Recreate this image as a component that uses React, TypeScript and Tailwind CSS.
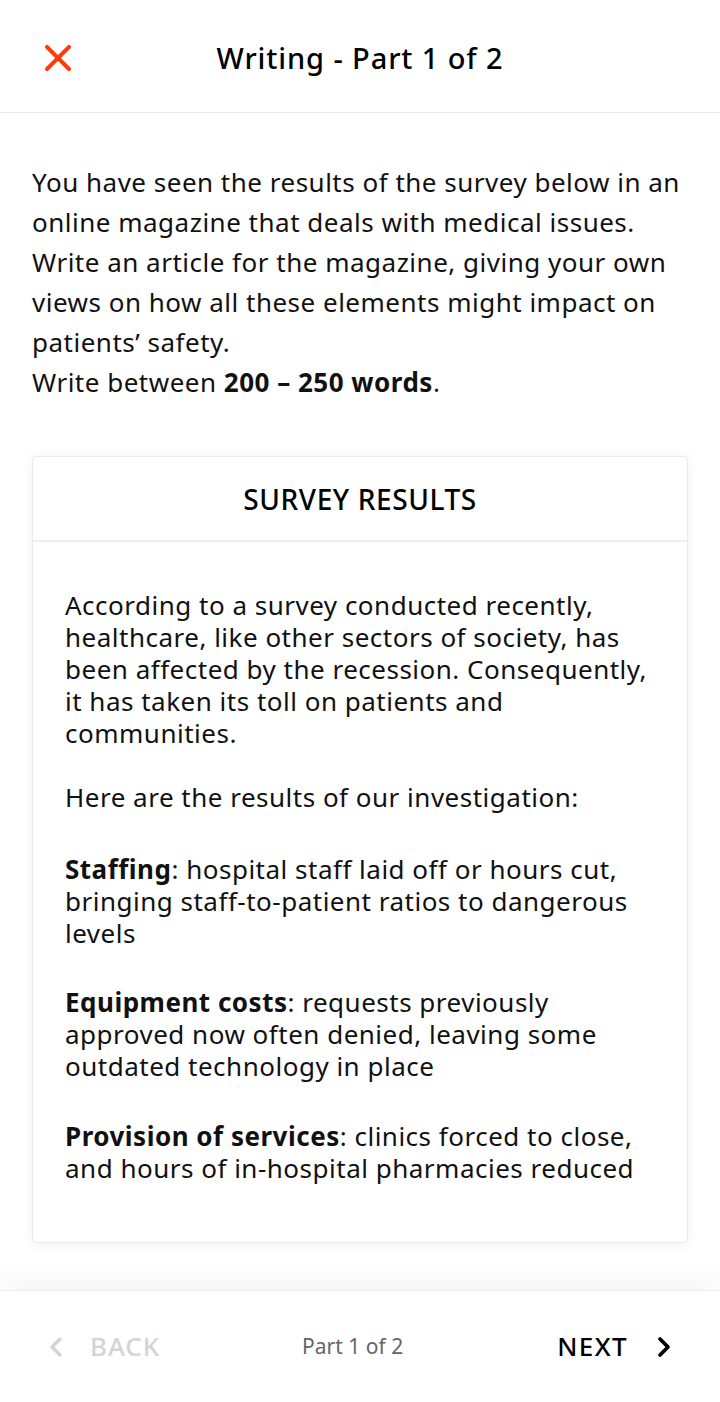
import { X, ChevronLeft, ChevronRight } from "lucide-react";

const font = { fontFamily: '"Noto Sans", "Open Sans", sans-serif' };

const SurveyCard = () => (
  <div className="mx-8 rounded border border-[#ececec] bg-white shadow-[0_2px_14px_rgba(0,0,0,0.06)]">
    <div className="flex h-[85px] items-center justify-center border-b-2 border-[#eeeeee]">
      <h2 className="text-[28px] font-medium tracking-[0.6px] text-black">SURVEY RESULTS</h2>
    </div>
    <div className="px-8 pb-[58px] pt-[47px] text-[26px] leading-8 tracking-[0.5px] text-[#111]">
      <p>
        According to a survey conducted recently, healthcare, like other
        sectors of society, has been affected by the recession. Consequently,
        it has taken its toll on patients and communities.
      </p>
      <p className="mt-8">Here are the results of our investigation:</p>
      <p className="mt-10">
        <b className="font-bold">Staffing</b>: hospital staff laid off or hours
        cut, bringing staff-to-patient ratios to dangerous levels
      </p>
      <p className="mt-[37px]">
        <b className="font-bold">Equipment costs</b>: requests previously
        approved now often denied, leaving some outdated technology in place
      </p>
      <p className="mt-[38px]">
        <b className="font-bold">Provision of services</b>: clinics forced to
        close, and hours of in-hospital pharmacies reduced
      </p>
    </div>
  </div>
);

export default function App() {
  return (
    <div className="flex h-[1402px] w-[720px] flex-col bg-white" style={font}>
      {/* header */}
      <header className="relative flex h-[113px] shrink-0 items-center justify-center border-b border-[#e8e8e8]">
        <button className="absolute left-[36px] top-[36px] text-[#ff3b0a]">
          <X size={44} strokeWidth={2.2} />
        </button>
        <h1 className="pt-1 text-[29px] font-medium tracking-[0.9px] text-black">Writing - Part 1 of 2</h1>
      </header>

      {/* content */}
      <main className="flex-1 overflow-hidden">
        <p className="px-8 pt-[49px] text-[26px] leading-10 tracking-[0.5px] text-[#111]">
          You have seen the results of the survey below in an online magazine
          that deals with medical issues. Write an article for the magazine,
          giving your own views on how all these elements might impact on
          patients’ safety.
          <br />
          Write between <b className="font-bold">200 – 250 words</b>.
        </p>
        <div className="pt-[54px]">
          <SurveyCard />
        </div>
      </main>

      {/* footer */}
      <footer className="flex h-[112px] shrink-0 items-center justify-between border-t border-[#eeeeee] pl-10 pr-10 shadow-[0_-10px_30px_rgba(0,0,0,0.045)]">
        <button className="flex items-center gap-[18px] text-[26px] font-medium tracking-[0.9px] text-[#d4d4d4]">
          <ChevronLeft size={32} strokeWidth={2.6} />
          BACK
        </button>
        <span className="pr-3 text-[21px] text-[#666]">Part 1 of 2</span>
        <button className="flex items-center gap-5 text-[26px] font-medium tracking-[1.4px] text-black">
          NEXT
          <ChevronRight size={32} strokeWidth={2.8} />
        </button>
      </footer>
    </div>
  );
}
